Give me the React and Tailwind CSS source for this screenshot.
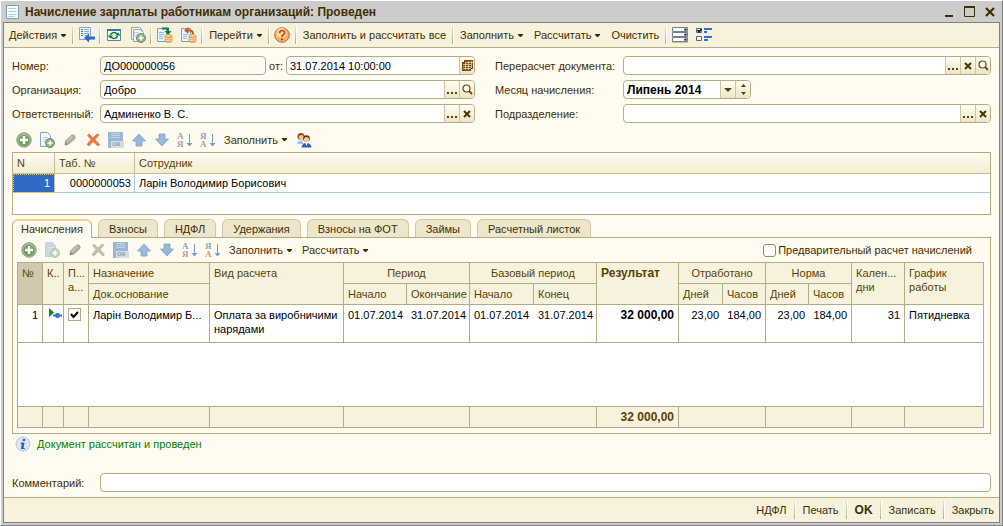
import React, { useState } from 'react';

const TABS = ['Начисления', 'Взносы', 'НДФЛ', 'Удержания', 'Взносы на ФОТ', 'Займы', 'Расчетный листок'];

// Icons
const Svg = ({ children, size = 16 }) => (
  <svg width={size} height={size} viewBox={`0 0 ${size} ${size}`} className="block shrink-0" aria-hidden="true">
    {children}
  </svg>
);

const CaretIcon = () => (
  <svg width="5" height="3" viewBox="0 0 5 3" className="block shrink-0" aria-hidden="true">
    <path d="M0 0h5v1L3 3H2L0 1z" fill="#3f2f00" />
  </svg>
);

const DocumentIcon = () => (
  <Svg>
    <path d="M1.500 1.500h12v13h-12z" fill="#f4fafd" stroke="#7d9db5" />
    <path d="M3.500 4.500h8M3.500 7.500h8M3.500 10.500h8M3.500 12.500h6" stroke="#a5cfe3" />
  </Svg>
);

const WriteIcon = () => (
  <Svg>
    <path d="M.5 .5h11v12H.5z" fill="#eaf2fa" stroke="#8aa0c4" />
    <path d="M2 2.500h2M2 4.500h2M2 6.500h2M2 8.500h2" stroke="#4c7f9c" />
    <path d="M5 2.500h5M5 4.500h5M5 6.500h5M5 8.500h3" stroke="#8db4cf" />
    <path d="M5 11l5-4.500V9.500h6v3h-6v3z" fill="#2f6bc4" />
  </Svg>
);

const RefreshIcon = () => (
  <Svg>
    <path d="M1.500 2.500h13v11h-13z" fill="#f1faf8" stroke="#5c86a0" />
    <path d="M1 2h14v2H1z" fill="#4179a0" />
    <path d="M4.500 8a3.500 3 0 0 1 6.200-1.200" fill="none" stroke="#157a2f" strokeWidth="1.500" />
    <path d="M11.500 9a3.500 3 0 0 1-6.200 1.200" fill="none" stroke="#157a2f" strokeWidth="1.500" />
    <path d="M9 8.500h5.500L12 5.500zM1.500 8.500H7l-2.500 3z" fill="#157a2f" />
  </Svg>
);

const CopyIcon = ({ faded, single }) => (
  <Svg>
    <g opacity={faded ? 0.5 : 1}>
      {!single && <path d="M1.500 .5h8l3 3v9h-11z" fill="#fff" stroke="#8aa9a5" />}
      <path d={single ? 'M1.500 .5h7l3 3v11h-10z' : 'M3.500 2.500h7l3 3v9h-10z'} fill={faded ? '#8db3da' : '#f2f9fc'} stroke="#86a9bd" />
      <path d="M4 5.500h5M4 7.500h6M4 9.500h4" stroke="#b3d2e4" />
      <circle cx="11" cy="11" r="4.500" fill="#8fb381" stroke="#6d9162" />
      <path d="M11 8.500v5M8.500 11h5" stroke="#fff" strokeWidth="1.600" />
    </g>
  </Svg>
);

const Coins = () => (
  <g>
    <path d="M8 9v5.500q3.500 2 7 0V9z" fill="#f2a24a" stroke="#c9762a" strokeWidth=".6" />
    <ellipse cx="11.500" cy="9" rx="3.500" ry="1.500" fill="#fbd08c" stroke="#d98a35" strokeWidth=".6" />
    <path d="M8 11q3.500 2 7 0M8 13q3.500 2 7 0" fill="none" stroke="#fce0ae" />
  </g>
);

const PostIcon = () => (
  <Svg>
    <path d="M.5 1.500h9v13h-9z" fill="#e9f5fb" stroke="#7ea2ba" />
    <path d="M2 5.500h5M2 7.500h5M2 9.500h4M2 11.500h4" stroke="#83bfda" />
    <path d="M5 1.500h6V5" fill="none" stroke="#13803a" strokeWidth="2" />
    <path d="M7.500 4h7L11 8z" fill="#13803a" />
    <Coins />
  </Svg>
);

const UnpostIcon = () => (
  <Svg>
    <path d="M.5 1.500h9v13h-9z" fill="#e9f5fb" stroke="#7ea2ba" />
    <path d="M2 7.500h5M2 9.500h4M2 11.500h4" stroke="#83bfda" />
    <path d="M6 3.500h3q3 0 3 4" fill="none" stroke="#cf5520" strokeWidth="2" />
    <path d="M3 3.500L7.500 0v7z" fill="#cf5520" />
    <Coins />
  </Svg>
);

const HelpIcon = () => (
  <Svg>
    <circle cx="8" cy="8" r="7.300" fill="#f6b264" stroke="#a2714a" />
    <circle cx="7.500" cy="6" r="5" fill="#fbd9a5" />
    <path d="M5.500 6.200q0-2.700 2.600-2.700t2.500 2.300q0 1.300-1.400 2T8 10" fill="none" stroke="#c8441a" strokeWidth="1.700" />
    <path d="M7 11.200h2v2H7z" fill="#c8441a" />
  </Svg>
);

const ListIcon = () => (
  <Svg>
    {[0, 5, 10].map((y) => (
      <g key={y}>
        <path d={`M.5 ${y + 0.5}h15v4H.5z`} fill="#fff" stroke="#70808f" />
        <path d={`M12 ${y + 1}h3v3h-3z`} fill="#a9b5c0" />
        <path d={`M12 ${y + 2}h3l-1.500 2z`} fill="#2c3640" />
      </g>
    ))}
    <path d="M0 15h16v1H0z" fill="#cfc29a" />
  </Svg>
);

const ChecksIcon = () => (
  <Svg>
    <path d="M.5 1.500h5v4h-5zM.5 9.500h5v4h-5z" fill="#fff" stroke="#5b6b78" />
    <path d="M1.500 3L3 5l2.500-3" fill="none" stroke="#111" strokeWidth="1.500" />
    <path d="M8 1h8v2H8zM8 4h3v2H8zM8 9h8v2H8zM8 12h4v2H8z" fill="#3a6fd0" />
  </Svg>
);

const AddIcon = () => (
  <Svg>
    <circle cx="8" cy="8" r="7.200" fill="#a3bd96" stroke="#8d977f" />
    <circle cx="8" cy="8.500" r="5.500" fill="#6fa05c" />
    <path d="M8 4v8M4 8h8" stroke="#fff" strokeWidth="2.400" />
  </Svg>
);

const PencilIcon = () => (
  <Svg>
    <path d="M3 13l.5-4L9 3.500q1.500-1.500 3.500 0 1.500 2 0 3.500L7 12z" fill="#b0b39c" stroke="#94977f" strokeWidth=".7" />
    <path d="M5 9.500L10.500 4" stroke="#d5d7c4" />
    <path d="M3 13l.3-2.500L5.500 12.500z" fill="#7c7f6a" />
  </Svg>
);

const CrossIcon = ({ faded }) => (
  <Svg>
    <path
      d="M2.500 3.500l1.500-1.500 4 4 4-4 2 1-4 4.500 4.500 5-1.500 1.500L8 9.500 4 14l-2-1.500 4-5z"
      fill={faded ? '#c4c1ab' : '#ee7a3c'}
      stroke={faded ? '#aeab97' : '#dd5c24'}
      strokeWidth=".6"
    />
  </Svg>
);

const DiskIcon = () => (
  <Svg>
    <path d="M0 0h15v16H0z" fill="#9ab8d6" />
    <path d="M3 1h9v5H3z" fill="#c3d4e4" />
    <path d="M3 2.500h9M3 4.500h9" stroke="#9ab8d6" />
    <path d="M3 9h13v7H3z" fill="#d5dee4" />
    <text x="4" y="14" fontSize="6" fontWeight="bold" fill="#8c9dac" fontFamily="Liberation Sans, sans-serif">ОК</text>
  </Svg>
);

const ArrowIcon = ({ down }) => (
  <Svg>
    <path
      d={down ? 'M5 2h6v5h3.500L8 14 1.500 7H5z' : 'M5 14h6V9h3.500L8 2 1.500 9H5z'}
      fill="#96bade"
      stroke="#8aa5bf"
      strokeWidth=".9"
      strokeLinejoin="round"
    />
  </Svg>
);

const SortIcon = ({ letters }) => (
  <Svg size={18}>
    <text x="1" y="8" fontSize="9" fontWeight="bold" fill="#8fa6b8" fontFamily="Liberation Serif, serif">{letters[0]}</text>
    <text x="1" y="16" fontSize="9" fontWeight="bold" fill="#b5a092" fontFamily="Liberation Serif, serif">{letters[1]}</text>
    <path d="M13.500 3v10" stroke="#6ea3c4" />
    <path d="M10.500 12h6l-3 3.500z" fill="#6ea3c4" />
  </Svg>
);

const PeopleIcon = () => (
  <Svg>
    <circle cx="5" cy="4.500" r="3.500" fill="#8a4a20" />
    <circle cx="5.500" cy="5.500" r="2.600" fill="#f6c08c" />
    <path d="M1 11q1-3 5-2.500l2 3.500H2z" fill="#9cc0e8" />
    <circle cx="10.500" cy="6.500" r="3.300" fill="#5c3516" />
    <circle cx="10.500" cy="7.600" r="2.600" fill="#f8c594" />
    <path d="M5.500 15.500q.5-4.500 5-4.500t5 4.500z" fill="#2f62b5" />
    <path d="M9.500 11h2l-1 3z" fill="#fff" />
  </Svg>
);

const InfoIcon = () => (
  <Svg>
    <path d="M0 0h16v16H0z" fill="#fff" />
    <circle cx="8" cy="8" r="7" fill="#dfe5ee" stroke="#bcc5d2" />
    <path d="M8 3h2.500l-.5 2H7.500zM6 6.500h3.500L8.500 12H10l-.3 1H5.800l1-5H5.700z" fill="#2b5fc4" />
  </Svg>
);

const RowStateIcon = () => (
  <svg width="15" height="12" viewBox="0 0 15 12" className="block" aria-hidden="true">
    <path d="M2 0l5 4.500L2 9z" fill="#0b8a1e" />
    <path d="M6 6.500h2L9.500 5h2L13 6.500h2v2h-2L11.500 10h-2L8 8.500H6z" fill="#3a75d0" />
  </svg>
);

const CalendarIcon = () => (
  <svg width="11" height="11" viewBox="0 0 11 11" className="block" aria-hidden="true">
    <path d="M2 0h9v9H9v2H0V2h2z" fill="#7a4b12" />
    <path d="M1 4.500h8M1 6.500h8M1 8.500h8M3.500 3v7M6.500 1v9M9.500 1v7M3 2.500h8" stroke="#f3e3bd" strokeWidth=".7" />
  </svg>
);

const SearchIcon = () => (
  <svg width="11" height="11" viewBox="0 0 11 11" className="block" aria-hidden="true">
    <circle cx="4.500" cy="4.500" r="3.500" fill="#fffdf4" stroke="#6b4a12" strokeWidth="1.200" />
    <path d="M7 7l3 3" stroke="#6b4a12" strokeWidth="1.800" />
  </svg>
);

const ClearIcon = () => (
  <svg width="8" height="8" viewBox="0 0 8 8" className="block" aria-hidden="true">
    <path d="M1 1l6 6M7 1L1 7" stroke="#4a3500" strokeWidth="2" />
  </svg>
);

const DotsIcon = () => (
  <svg width="11" height="9" viewBox="0 0 11 9" className="block" aria-hidden="true">
    <path d="M0 7h2v2H0zM4 7h2v2H4zM8 7h2v2H8z" fill="#5a4300" />
  </svg>
);

const DownIcon = () => (
  <svg width="8" height="4" viewBox="0 0 8 4" className="block" aria-hidden="true">
    <path d="M0 0h8L4 4z" fill="#5a4300" />
  </svg>
);

const SpinIcon = () => (
  <svg width="5" height="11" viewBox="0 0 5 11" className="block" aria-hidden="true">
    <path d="M0 3h5L2.500 0zM0 8h5l-2.500 3z" fill="#5a4300" />
  </svg>
);

// Building blocks
const Separator = () => (
  <span className="h-[18px] w-0.5 shrink-0 border-r border-white bg-linear-to-b from-[#ebe5c8] to-[#b0ac88]" />
);

const IconButton = ({ label, children }) => (
  <button type="button" aria-label={label} className="flex h-5 w-[23px] shrink-0 items-center justify-center">
    {children}
  </button>
);

const MenuButton = ({ children, caret = true }) => (
  <button type="button" className="flex h-5 shrink-0 items-center gap-1 px-[5px] whitespace-nowrap">
    {children}
    {caret && <CaretIcon />}
  </button>
);

const FieldButton = ({ label, children }) => (
  <button
    type="button"
    aria-label={label}
    className="flex w-[15px] shrink-0 items-center justify-center border-l border-[#cdc59f] bg-linear-to-b from-[#fffdf3] to-[#ece5c6]"
  >
    {children}
  </button>
);

const Field = ({ id, value = '', readOnly, children, className = 'flex-1' }) => (
  <div className={`flex h-[19px] min-w-0 overflow-hidden rounded border border-[#b5ab80] ${readOnly ? 'bg-[#fffbf0]' : 'bg-white'} ${className}`}>
    <input id={id} defaultValue={value} readOnly={readOnly} className="min-w-0 flex-1 bg-transparent px-[3px] text-black outline-none" />
    {children}
  </div>
);

const GridToolbar = ({ second }) => (
  <>
    <IconButton label="Добавить"><AddIcon /></IconButton>
    <IconButton label="Скопировать"><CopyIcon single faded={second} /></IconButton>
    <IconButton label="Изменить"><PencilIcon /></IconButton>
    <IconButton label="Удалить"><CrossIcon faded={second} /></IconButton>
    <IconButton label="Закончить редактирование"><DiskIcon /></IconButton>
    <IconButton label="Переместить вверх"><ArrowIcon /></IconButton>
    <IconButton label="Переместить вниз"><ArrowIcon down /></IconButton>
    <IconButton label="Сортировать по возрастанию"><SortIcon letters="АЯ" /></IconButton>
    <IconButton label="Сортировать по убыванию"><SortIcon letters="ЯА" /></IconButton>
    <MenuButton>Заполнить</MenuButton>
  </>
);

const EmployeesTable = () => (
  <div className="border border-[#b5ab80] bg-white pb-[21px]">
    <table className="w-full table-fixed border-separate border-spacing-0 text-left">
      <colgroup>
        <col className="w-[42px]" />
        <col className="w-20" />
        <col />
      </colgroup>
      <thead>
        <tr className="h-[21px] bg-linear-to-b from-[#fffbf0] via-[#f7f3e2] to-[#f3ecca] text-[#5a4300]">
          <th className="border-r border-b border-[#c8be94] px-1 font-normal">N</th>
          <th className="border-r border-b border-[#c8be94] px-1 font-normal">Таб. №</th>
          <th className="border-b border-[#c8be94] px-1 font-normal">Сотрудник</th>
        </tr>
      </thead>
      <tbody>
        <tr className="h-[19px] text-black">
          <td className="border-r border-b border-[#a9c9dc] bg-[#316ac5] px-1 text-right text-white outline -outline-offset-1 outline-dotted outline-[#e0c060]">1</td>
          <td className="border-r border-b border-[#a9c9dc] px-[3px] text-right">0000000053</td>
          <td className="border-b border-[#a9c9dc] px-1">Ларін Володимир Борисович</td>
        </tr>
      </tbody>
    </table>
  </div>
);

const TH = 'border-r border-b border-[#b5ab80] px-1 font-normal align-top leading-[14px] pt-[3px] overflow-hidden whitespace-nowrap';
const TD = 'px-1 align-top leading-[14px] pt-[3px] whitespace-nowrap';
const TD_LINE = `${TD} border-r border-[#b5ab80]`;
const TF = 'border-r border-[#b5ab80]';

const AccrualsTable = () => (
  <div className="flex flex-1 flex-col border border-[#b5ab80] bg-white">
    <table className="w-full flex-1 table-fixed border-separate border-spacing-0 text-left">
      <colgroup>
        <col className="w-[25px]" />
        <col className="w-[21px]" />
        <col className="w-[25px]" />
        <col className="w-[121px]" />
        <col className="w-[134px]" />
        <col className="w-[63px]" />
        <col className="w-[63px]" />
        <col className="w-[64px]" />
        <col className="w-[63px]" />
        <col className="w-[82px]" />
        <col className="w-[44px]" />
        <col className="w-[43px]" />
        <col className="w-[43px]" />
        <col className="w-[43px]" />
        <col className="w-[53px]" />
        <col />
      </colgroup>
      <thead className="bg-[#f7f2de] text-[#5a4300]">
        <tr className="h-[21px]">
          <th rowSpan={2} className={`${TH} bg-[#d0c9b0]`}>№</th>
          <th rowSpan={2} className={TH}>К..</th>
          <th rowSpan={2} className={TH}>П...<br />а...</th>
          <th className={TH}>Назначение</th>
          <th rowSpan={2} className={TH}>Вид расчета</th>
          <th colSpan={2} className={`${TH} text-center`}>Период</th>
          <th colSpan={2} className={`${TH} text-center`}>Базовый период</th>
          <th rowSpan={2} className={TH}><b className="text-xs leading-[14px]">Результат</b></th>
          <th colSpan={2} className={`${TH} text-center`}>Отработано</th>
          <th colSpan={2} className={`${TH} text-center`}>Норма</th>
          <th rowSpan={2} className={TH}>Кален...<br />дни</th>
          <th rowSpan={2} className={`${TH} border-r-0`}>График<br />работы</th>
        </tr>
        <tr className="h-[21px]">
          <th className={TH}>Док.основание</th>
          <th className={TH}>Начало</th>
          <th className={TH}>Окончание</th>
          <th className={TH}>Начало</th>
          <th className={TH}>Конец</th>
          <th className={TH}>Дней</th>
          <th className={TH}>Часов</th>
          <th className={TH}>Дней</th>
          <th className={TH}>Часов</th>
        </tr>
      </thead>
      <tbody className="text-black">
        <tr className="h-[37px]">
          <td className={`${TD_LINE} text-right`}>1</td>
          <td className={TD_LINE}><RowStateIcon /></td>
          <td className={TD_LINE}>
            <label className="relative flex size-[13px] items-center justify-center">
              <input
                type="checkbox"
                defaultChecked
                aria-label="Авторасчет"
                className="peer size-[13px] appearance-none border border-[#b5ab80] bg-white"
              />
              <svg width="9" height="8" viewBox="0 0 9 8" className="pointer-events-none absolute hidden peer-checked:block" aria-hidden="true">
                <path d="M1 3l2.500 3L8 1" fill="none" stroke="#000" strokeWidth="2" />
              </svg>
            </label>
          </td>
          <td className={TD_LINE}>Ларін Володимир Б...</td>
          <td className={TD_LINE}>Оплата за виробничими<br />нарядами</td>
          <td className={TD}>01.07.2014</td>
          <td className={TD_LINE}>31.07.2014</td>
          <td className={TD}>01.07.2014</td>
          <td className={TD_LINE}>31.07.2014</td>
          <td className={`${TD_LINE} text-right text-xs font-bold`}>32 000,00</td>
          <td className={`${TD} text-right`}>23,00</td>
          <td className={`${TD_LINE} text-right`}>184,00</td>
          <td className={`${TD} text-right`}>23,00</td>
          <td className={`${TD_LINE} text-right`}>184,00</td>
          <td className={`${TD_LINE} text-right`}>31</td>
          <td className={TD}>Пятидневка</td>
        </tr>
        <tr className="h-[65px]">
          <td colSpan={16} className="border-y border-[#b5ab80]" />
        </tr>
      </tbody>
      <tfoot className="bg-[#f7f2de] text-[#5a4300]">
        <tr className="h-5">
          <td className={TF} />
          <td className={TF} />
          <td className={TF} />
          <td className={TF} />
          <td className={TF} />
          <td colSpan={2} className={TF} />
          <td colSpan={2} className={TF} />
          <td className={`${TF} px-1 text-right text-xs leading-[14px] font-bold`}>32 000,00</td>
          <td colSpan={2} className={TF} />
          <td colSpan={2} className={TF} />
          <td className={TF} />
          <td />
        </tr>
      </tfoot>
    </table>
  </div>
);

export default function App() {
  const [activeTab, setActiveTab] = useState('Начисления');

  return (
    <div className="flex min-h-screen flex-col border border-t-white border-r-[#808080] border-b-[#808080] border-l-white bg-[#cccccc] pr-0.5 pb-0.5 pl-0.5 font-['Liberation_Sans',sans-serif] text-[11px] leading-[14px] text-[#3f2f00]">
      {/* Title bar */}
      <header className="flex h-[21px] items-center gap-1 pr-1 pl-0.5">
        <DocumentIcon />
        <h1 className="flex-1 text-xs font-bold">Начисление зарплаты работникам организаций: Проведен</h1>
        <div className="flex items-center gap-2">
          <button type="button" aria-label="Свернуть">
            <Svg size={12}><path d="M1 9h8v2H1z" fill="#3f2f00" /></Svg>
          </button>
          <button type="button" aria-label="Развернуть">
            <Svg size={12}><path d="M.5 1.500h10v9H.5z" fill="none" stroke="#3f2f00" /><path d="M0 0h11v2H0z" fill="#3f2f00" /></Svg>
          </button>
          <button type="button" aria-label="Закрыть окно">
            <Svg size={12}><path d="M2 2l8 8M10 2l-8 8" stroke="#3f2f00" strokeWidth="2.200" /></Svg>
          </button>
        </div>
      </header>

      <main className="flex flex-1 flex-col border border-[#808080] bg-[#fffbf0]">
        {/* Main toolbar */}
        <div className="flex h-[25px] shrink-0 items-center gap-px border-b border-[#b5ab80] bg-[#f7f2de]">
          <MenuButton>Действия</MenuButton>
          <Separator />
          <IconButton label="Записать документ"><WriteIcon /></IconButton>
          <Separator />
          <IconButton label="Обновить"><RefreshIcon /></IconButton>
          <IconButton label="Скопировать документ"><CopyIcon /></IconButton>
          <Separator />
          <IconButton label="Провести"><PostIcon /></IconButton>
          <IconButton label="Отмена проведения"><UnpostIcon /></IconButton>
          <Separator />
          <MenuButton>Перейти</MenuButton>
          <Separator />
          <IconButton label="Справка"><HelpIcon /></IconButton>
          <Separator />
          <MenuButton caret={false}>Заполнить и рассчитать все</MenuButton>
          <Separator />
          <MenuButton>Заполнить</MenuButton>
          <MenuButton>Рассчитать</MenuButton>
          <MenuButton caret={false}>Очистить</MenuButton>
          <Separator />
          <IconButton label="Список"><ListIcon /></IconButton>
          <IconButton label="Настройка"><ChecksIcon /></IconButton>
        </div>

        <div className="flex flex-1 flex-col px-2 pt-2">
          {/* Document fields */}
          <div className="grid grid-cols-[88px_375px_20px_128px_1fr] items-center gap-y-[5px]">
            <label htmlFor="number">Номер:</label>
            <div className="flex items-center gap-[3px]">
              <Field id="number" value="ДО000000056" readOnly className="w-[166px]" />
              <label htmlFor="date">от:</label>
              <Field id="date" value="31.07.2014 10:00:00">
                <FieldButton label="Календарь"><CalendarIcon /></FieldButton>
              </Field>
            </div>
            <span />
            <label htmlFor="recalc">Перерасчет документа:</label>
            <Field id="recalc">
              <FieldButton label="Выбрать"><DotsIcon /></FieldButton>
              <FieldButton label="Очистить поле"><ClearIcon /></FieldButton>
              <FieldButton label="Открыть"><SearchIcon /></FieldButton>
            </Field>

            <label htmlFor="organization">Организация:</label>
            <Field id="organization" value="Добро">
              <FieldButton label="Выбрать"><DotsIcon /></FieldButton>
              <FieldButton label="Открыть"><SearchIcon /></FieldButton>
            </Field>
            <span />
            <label htmlFor="month">Месяц начисления:</label>
            <div className="flex h-[19px] w-32 overflow-hidden rounded border border-[#b5ab80] bg-white">
              <select id="month" className="min-w-0 flex-1 appearance-none px-[3px] text-xs font-bold text-black outline-none">
                <option>Липень 2014</option>
              </select>
              <FieldButton label="Раскрыть список"><DownIcon /></FieldButton>
              <FieldButton label="Изменить месяц"><SpinIcon /></FieldButton>
            </div>

            <label htmlFor="responsible">Ответственный:</label>
            <Field id="responsible" value="Админенко В. С.">
              <FieldButton label="Выбрать"><DotsIcon /></FieldButton>
              <FieldButton label="Очистить поле"><ClearIcon /></FieldButton>
            </Field>
            <span />
            <label htmlFor="department">Подразделение:</label>
            <Field id="department">
              <FieldButton label="Выбрать"><DotsIcon /></FieldButton>
              <FieldButton label="Очистить поле"><ClearIcon /></FieldButton>
            </Field>
          </div>

          {/* Employees */}
          <div className="flex h-[29px] items-center pt-1">
            <GridToolbar />
            <IconButton label="Подбор сотрудников"><PeopleIcon /></IconButton>
          </div>
          <EmployeesTable />

          {/* Tabs */}
          <div role="tablist" className="mt-1 flex gap-1.5">
            {TABS.map((tab) => (
              <button
                key={tab}
                type="button"
                role="tab"
                aria-selected={tab === activeTab}
                onClick={() => setActiveTab(tab)}
                className={
                  tab === activeTab
                    ? 'z-10 -mb-px h-[19px] rounded-t-md border border-t-2 border-b-0 border-[#b5ab80] border-t-[#f8cf88] bg-[#fffbf0] px-2 pb-0.5'
                    : 'h-[18px] rounded-t-md border border-b-0 border-[#cfc7a2] bg-[#eee6cb] px-2.5'
                }
              >
                {tab}
              </button>
            ))}
          </div>
          <div className="flex flex-1 flex-col border border-[#b5ab80] pr-1.5 pb-[5px] pl-1">
            <div className="flex h-6 items-center pr-1.5">
              <GridToolbar second />
              <MenuButton>Рассчитать</MenuButton>
              <label className="ml-auto flex items-center gap-0.5 pr-1.5">
                <input type="checkbox" className="size-[13px] appearance-none rounded-[3px] border border-[#7fa05a] bg-white" />
                Предварительный расчет начислений
              </label>
            </div>
            <AccrualsTable />
          </div>

          {/* Status and comment */}
          <div className="flex h-5 items-center gap-1.5 pl-[3px] text-[#008000]">
            <InfoIcon />
            <span>Документ рассчитан и проведен</span>
          </div>
          <div className="mt-[19px] mb-[5px] flex items-center">
            <label htmlFor="comment" className="w-[88px]">Комментарий:</label>
            <Field id="comment" />
          </div>
        </div>

        {/* Commands */}
        <footer className="flex h-[25px] shrink-0 items-center justify-end gap-0.5 border-t border-[#b5ab80] bg-[#f7f2de]">
          <MenuButton caret={false}>НДФЛ</MenuButton>
          <Separator />
          <MenuButton caret={false}>Печать</MenuButton>
          <Separator />
          <MenuButton caret={false}><b className="text-xs">OK</b></MenuButton>
          <Separator />
          <MenuButton caret={false}>Записать</MenuButton>
          <Separator />
          <MenuButton caret={false}>Закрыть</MenuButton>
        </footer>
      </main>
    </div>
  );
}
